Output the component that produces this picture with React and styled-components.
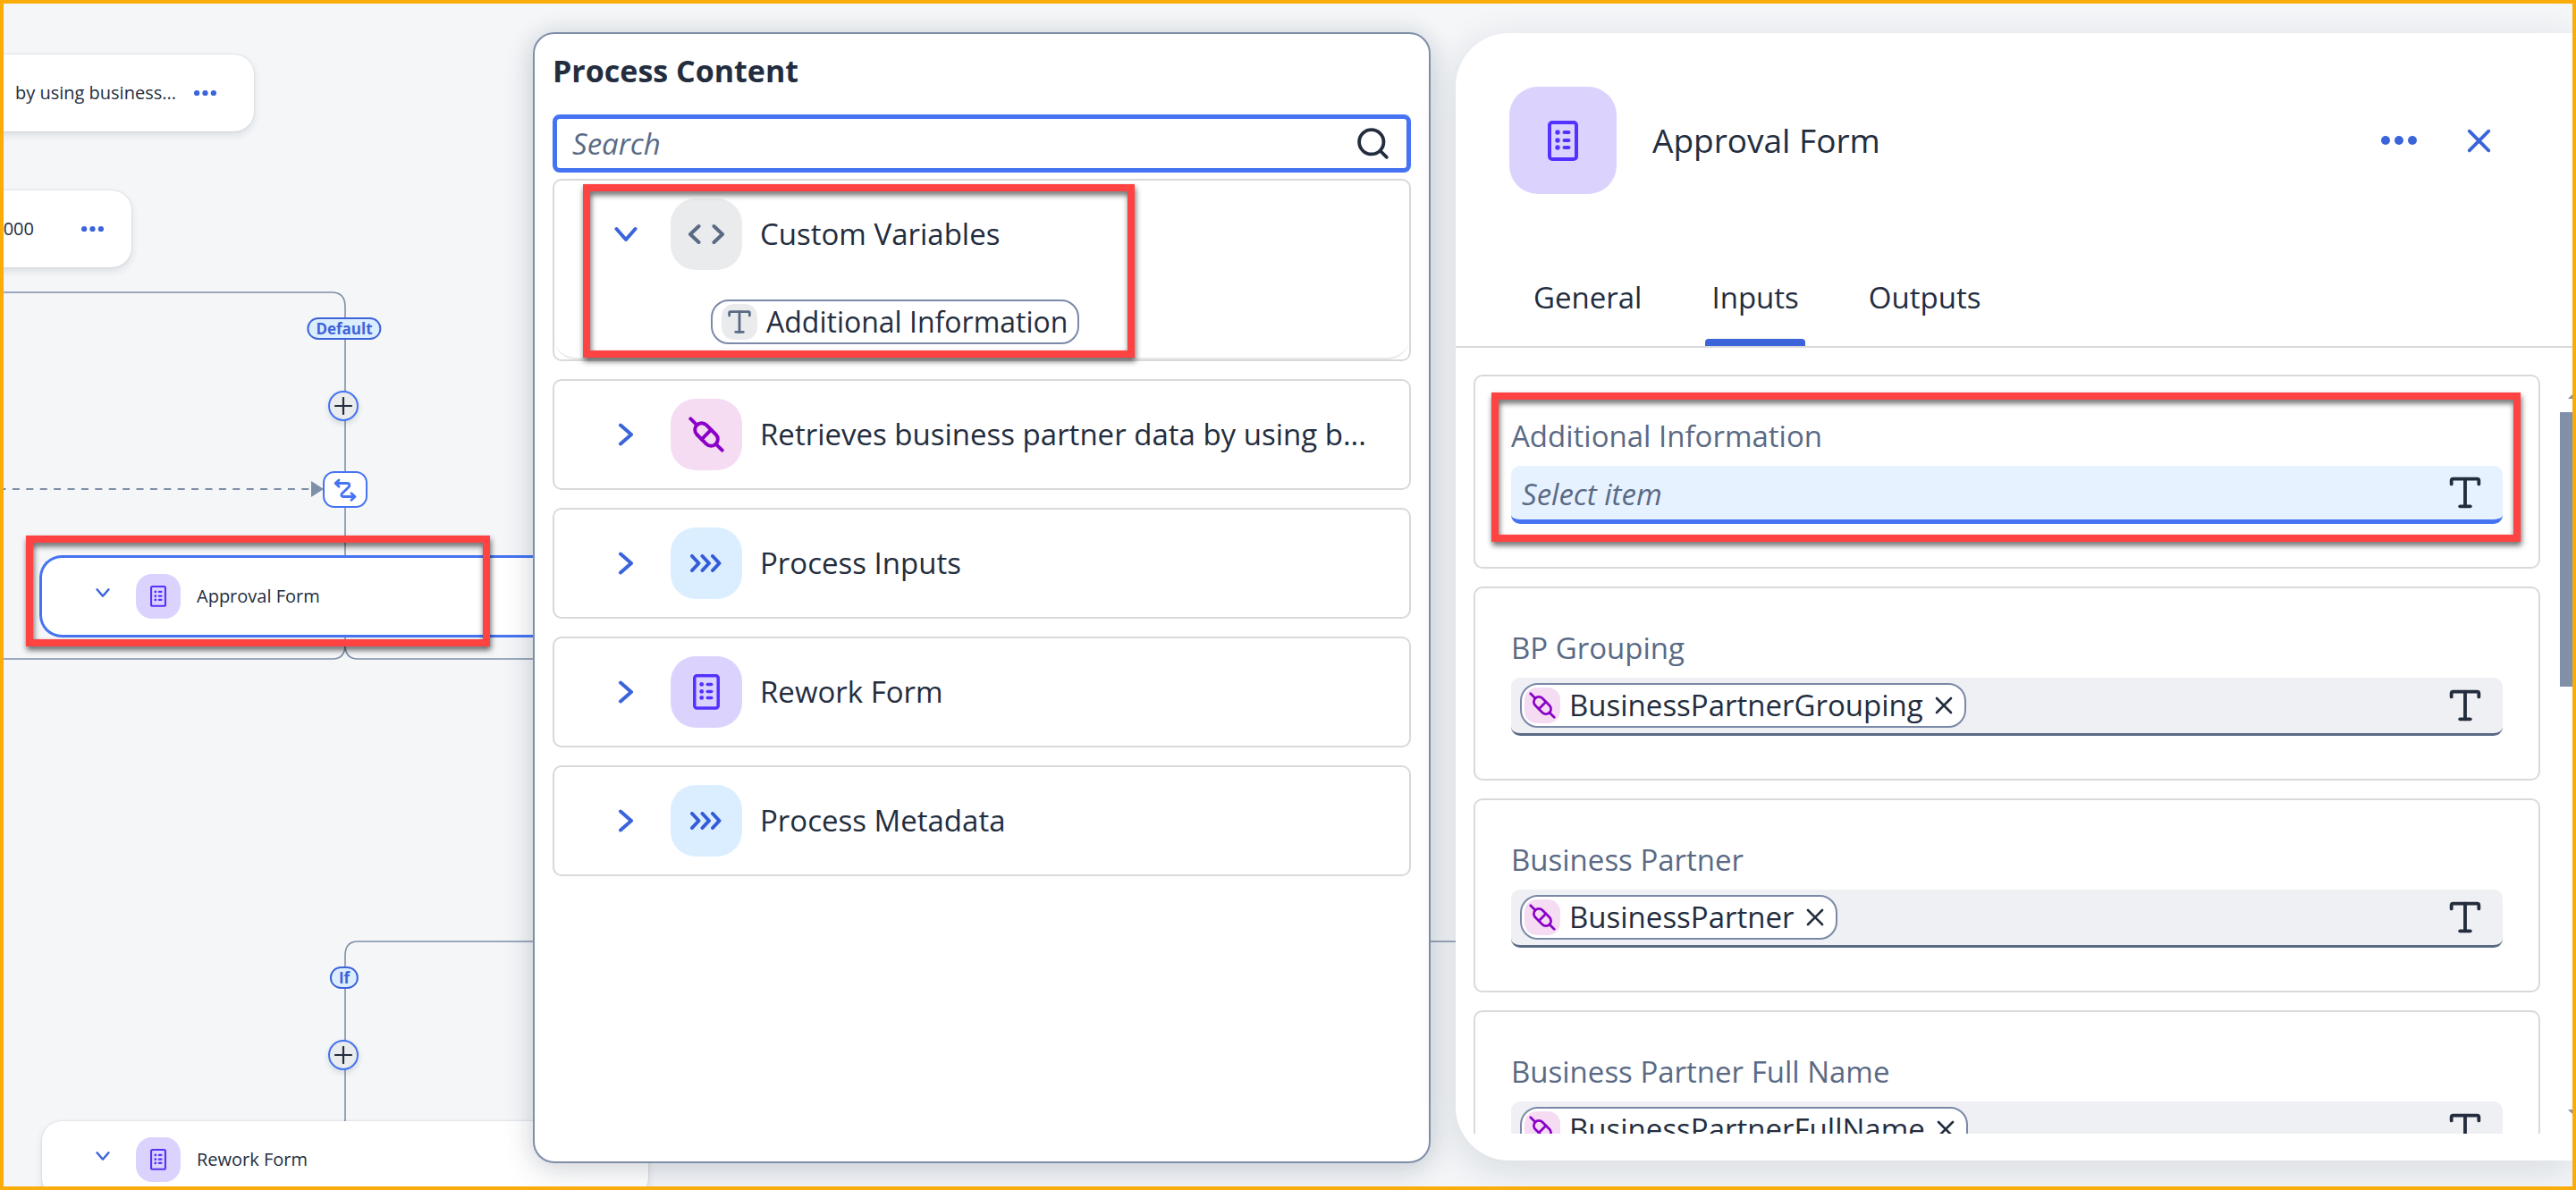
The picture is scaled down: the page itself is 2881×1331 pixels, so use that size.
import React from "react";
import styled, { createGlobalStyle, css } from "styled-components";
import { Search, Type } from "lucide-react";

const c = {
  ink: "#232d3e",
  label: "#5a6a85",
  blue: "#3b64da",
  focus: "#4573f2",
  line: "#d9d9d9",
  edge: "#7f8fa9",
  violet: "#5332ff",
  magenta: "#8b00c8",
};

const tileColors = {
  grey: "#eaebed",
  pink: "#f5dcf2",
  sky: "#dbeeff",
  violet: "#dbd3fe",
};

const GlobalStyle = createGlobalStyle`
  * { box-sizing: border-box; }
  body { margin: 0; }
  body, button, input { font-family: "Open Sans", "Noto Sans", sans-serif; color: ${c.ink}; }
  button { border: 0; padding: 0; background: none; cursor: pointer; text-align: left; }
  svg { display: block; flex: none; }
`;

/* ---------- page ---------- */

const Page = styled.div`
  position: relative;
  height: 100vh;
  overflow: hidden;
  background: #f4f6f8;

  &::after {
    content: "";
    position: absolute;
    inset: 0;
    border: 4px solid #faac0a;
    pointer-events: none;
  }
`;

const Overlay = styled.div`
  position: relative;
  height: 100%;
  display: grid;
  grid-template-columns: 596fr 1004fr 28fr 1249fr;
  padding: 36px 4px 30px 0;
`;

const Highlight = styled.div`
  position: absolute;
  border: 8px solid #ff4242;
  filter: drop-shadow(1px 4px 3px rgba(0, 0, 0, 0.6));
  pointer-events: none;
  z-index: 2;
`;

const Tile = styled.span`
  display: flex;
  flex: none;
  align-items: center;
  justify-content: center;
  width: ${(p) => p.$size}px;
  height: ${(p) => p.$size}px;
  border-radius: ${(p) => p.$radius}px;
  background: ${(p) => tileColors[p.$tone]};
`;

/* ---------- icons ---------- */

const FormIcon = ({ width }) => (
  <svg width={width} viewBox="0 0 34 45" fill={c.violet}>
    <rect x="2" y="2" width="30" height="41" rx="3" fill="none" stroke={c.violet} strokeWidth="4" />
    {[13, 22, 30].map((y) => (
      <g key={y}>
        <circle cx="11" cy={y} r="2.7" />
        <rect x="16.5" y={y - 2} width="9" height="4" rx="2" />
      </g>
    ))}
  </svg>
);

const LinkIcon = ({ size, stroke = 4 }) => (
  <svg width={size} height={size} viewBox="0 0 40 40" fill="none" stroke={c.magenta} strokeWidth={stroke} strokeLinecap="round">
    <g transform="rotate(45 20 20)">
      <path d="M-5 20H5M35 20H45M20 12.5V27.5" />
      <rect x="5" y="12.5" width="30" height="15" rx="7.5" />
    </g>
  </svg>
);

const FlowIcon = () => (
  <svg width="36" height="20" viewBox="0 0 36 20" fill="none" stroke="#345bd8" strokeWidth="4" strokeLinecap="round" strokeLinejoin="round">
    <path d="M2 2l7.500 8-7.500 8M13.500 2l7.500 8-7.500 8M25 2l7.500 8-7.500 8" />
  </svg>
);

const CodeIcon = () => (
  <svg width="42" height="24" viewBox="0 0 42 24" fill="none" stroke={c.label} strokeWidth="4" strokeLinecap="round" strokeLinejoin="round">
    <path d="M12.500 3L3 12l9.500 9M29.500 3l9.500 9-9.500 9" />
  </svg>
);

const ChevronIcon = ({ open, size = 26 }) => (
  <svg width={size} height={size} viewBox="0 0 26 26" fill="none" stroke={c.blue} strokeWidth="4" strokeLinecap="round" strokeLinejoin="round">
    <path d={open ? "M2.500 7L13 19 23.500 7" : "M7 2.500L19 13 7 23.500"} />
  </svg>
);

const DotsIcon = ({ width }) => (
  <svg width={width} viewBox="0 0 40 10" fill={c.blue}>
    <circle cx="5" cy="5" r="5" />
    <circle cx="20" cy="5" r="5" />
    <circle cx="35" cy="5" r="5" />
  </svg>
);

const CrossIcon = ({ size, stroke, color }) => (
  <svg width={size} height={size} viewBox="0 0 20 20" fill="none" stroke={color} strokeWidth={stroke} strokeLinecap="round">
    <path d="M2 2L18 18M18 2L2 18" />
  </svg>
);

const RouteIcon = () => (
  <svg width="26" height="26" viewBox="0 0 26 26" fill="none" stroke={c.focus} strokeWidth="2.800" strokeLinecap="round" strokeLinejoin="round">
    <path d="M2.500 5.500H15.500C18 5.500 18.500 8 17 9.700L9.500 17C8 18.700 9 20.500 11 20.500H23.500" />
    <path d="M6 2L2.200 5.500 6 9.200M20 16.800L24 20.500 20 24.200" />
  </svg>
);

const PlusIcon = () => (
  <svg width="20" height="20" viewBox="0 0 20 20" stroke={c.ink} strokeWidth="2.200" strokeLinecap="round">
    <path d="M10 1V19M1 10H19" />
  </svg>
);

/* ---------- process canvas ---------- */

const Canvas = styled.div`
  position: absolute;
  inset: 0;
  overflow: hidden;
`;

const Edges = styled.svg`
  position: absolute;
  inset: 0;
  width: 100%;
  height: 100%;
  fill: none;
  stroke: ${c.edge};
  stroke-width: 1.6;
`;

const Node = styled.div`
  position: absolute;
  left: ${(p) => p.$x}px;
  top: ${(p) => p.$y}px;
  width: ${(p) => p.$w}px;
  height: 86px;
  display: flex;
  align-items: center;
  padding: 0 ${(p) => p.$end || 42}px 0 60px;
  border-radius: 22px;
  background: #fff;
  font-size: 20px;
  line-height: 28px;
  white-space: nowrap;
  box-shadow: 0 0 2px rgba(34, 53, 72, 0.2), 0 4px 8px rgba(34, 53, 72, 0.12);
  ${(p) => p.$selected && css`box-shadow: 0 0 0 3px ${c.focus};`}
`;

const NodeToggle = styled.button`
  margin: 0 29px 8px 0;
`;

const NodeTitle = styled.span`
  margin-left: ${(p) => (p.$end ? "auto" : "18px")};
`;

const NodeMenu = styled.button`
  margin-left: ${(p) => p.$gap || "auto"};
`;

const Badge = styled.span`
  position: absolute;
  left: ${(p) => p.$x}px;
  top: ${(p) => p.$y}px;
  transform: translateX(-50%);
  height: 25px;
  padding: 0 8px;
  border: 2px solid #3f63d8;
  border-radius: 13px;
  background: #dbeeff;
  color: #3f63d8;
  font-size: 17px;
  font-weight: 700;
  line-height: 21px;
`;

const AddStep = styled.button`
  position: absolute;
  left: ${(p) => p.$x}px;
  top: ${(p) => p.$y}px;
  width: 34px;
  height: 34px;
  display: flex;
  align-items: center;
  justify-content: center;
  border: 2px solid ${c.focus};
  border-radius: 50%;
  background: #e9ebec;
  box-shadow: 0 3px 6px rgba(34, 53, 72, 0.15);
`;

const RouteStep = styled.button`
  position: absolute;
  left: ${(p) => p.$x}px;
  top: ${(p) => p.$y}px;
  width: 50px;
  height: 41px;
  display: flex;
  align-items: center;
  justify-content: center;
  border: 2px solid ${c.focus};
  border-radius: 13px;
  background: #fff;
`;

const CanvasHighlight = styled(Highlight)`
  left: 29px;
  top: 599px;
  width: 519px;
  height: 124px;
`;

const FormNode = ({ title, ...place }) => (
  <Node {...place}>
    <NodeToggle aria-label={`Toggle ${title}`}><ChevronIcon open size={16} /></NodeToggle>
    <Tile $size={50} $radius={18} $tone="violet"><FormIcon width={18} /></Tile>
    <NodeTitle>{title}</NodeTitle>
    <NodeMenu aria-label="More"><DotsIcon width={25} /></NodeMenu>
  </Node>
);

const ProcessCanvas = () => (
  <Canvas>
    <Edges>
      <path d="M0 327H371Q386 327 386 343V624" />
      <path d="M0 547H348" strokeWidth="2" strokeDasharray="8 7.400" strokeDashoffset="1.500" />
      <path d="M348 538V556L362 547Z" fill={c.edge} stroke="none" />
      <path d="M0 737H372Q386 737 386 721V710M386 721Q386 737 400 737H700" />
      <path d="M1700 1053H400Q386 1053 386 1069V1256" />
    </Edges>
    <Node $x={-200} $y={61} $w={484}>
      <NodeTitle $end>by using business...</NodeTitle>
      <NodeMenu $gap="20px" aria-label="More"><DotsIcon width={25} /></NodeMenu>
    </Node>
    <Node $x={-200} $y={213} $w={347} $end={31}>
      <NodeTitle $end>000</NodeTitle>
      <NodeMenu $gap="53px" aria-label="More"><DotsIcon width={25} /></NodeMenu>
    </Node>
    <Badge $x={385} $y={355}>Default</Badge>
    <AddStep $x={367} $y={437} aria-label="Add step"><PlusIcon /></AddStep>
    <RouteStep $x={361} $y={527} aria-label="Route"><RouteIcon /></RouteStep>
    <FormNode title="Approval Form" $x={47} $y={624} $w={678} $selected />
    <Badge $x={385} $y={1081}>If</Badge>
    <AddStep $x={367} $y={1163} aria-label="Add step"><PlusIcon /></AddStep>
    <FormNode title="Rework Form" $x={47} $y={1254} $w={678} />
    <CanvasHighlight />
  </Canvas>
);

/* ---------- chips ---------- */

const Chip = styled.span`
  display: inline-flex;
  align-items: center;
  flex: none;
  height: 50px;
  padding: ${(p) => (p.$inField ? "0 13px 0 3px" : "0 11px 0 10px")};
  border: 2px solid #7a89a8;
  border-radius: 20px;
  background: #fff;
  font-size: ${(p) => (p.$inField ? 33 : 32)}px;
  line-height: 44px;
`;

const ChipText = styled.span`
  margin-left: 10px;
`;

const ChipRemove = styled.button`
  margin-left: 13px;
`;

/* ---------- process content popover ---------- */

const Popover = styled.section`
  grid-column: 2;
  min-width: 0;
  padding: 18px 20px;
  border: 2px solid ${c.edge};
  border-radius: 24px;
  background: #fff;
  box-shadow: 0 0 24px rgba(34, 53, 72, 0.1), 0 10px 36px rgba(34, 53, 72, 0.14);
`;

const PopoverTitle = styled.h2`
  margin: 0 0 26px;
  font-size: 34px;
  font-weight: 700;
  line-height: 46px;
`;

const SearchBox = styled.label`
  display: flex;
  align-items: center;
  height: 65px;
  margin-bottom: 7px;
  padding: 0 17px 0 17px;
  border: 5px solid ${c.focus};
  border-radius: 8px;
`;

const TextInput = styled.input`
  flex: 1;
  min-width: 0;
  height: 50px;
  padding: 0;
  border: 0;
  outline: 0;
  background: none;
  font-size: 33px;

  &::placeholder {
    color: ${c.label};
    font-style: italic;
    opacity: 1;
  }
`;

const Groups = styled.div`
  display: grid;
  gap: 20px;
`;

const Group = styled.div`
  position: relative;
  border: 2px solid ${c.line};
  border-radius: 10px;
`;

const GroupHeader = styled.button`
  display: flex;
  align-items: center;
  width: 100%;
  height: 120px;
  padding: 0 40px 0 67px;
  font-size: 33px;
  line-height: 44px;

  & > svg { margin-right: 37px; }
`;

const GroupTitle = styled.span`
  margin-left: 20px;
  white-space: nowrap;
`;

const GroupBody = styled.div`
  display: flex;
  padding: 13px 0 15px 175px;
  border-bottom: 2px solid #e8e8e8;
  border-radius: 0 0 24px 24px;
`;

const GroupHighlight = styled(Highlight)`
  left: 32px;
  top: 4px;
  bottom: 2px;
  width: 617px;
`;

const groups = [
  { title: "Custom Variables", tone: "grey", icon: <CodeIcon />, items: ["Additional Information"] },
  { title: "Retrieves business partner data by using b...", tone: "pink", icon: <LinkIcon size={40} /> },
  { title: "Process Inputs", tone: "sky", icon: <FlowIcon /> },
  { title: "Rework Form", tone: "violet", icon: <FormIcon width={30} /> },
  { title: "Process Metadata", tone: "sky", icon: <FlowIcon /> },
];

const ProcessContent = () => (
  <Popover aria-label="Process Content">
    <PopoverTitle>Process Content</PopoverTitle>
    <SearchBox>
      <TextInput type="text" placeholder="Search" aria-label="Search" />
      <Search size={41} strokeWidth={2.2} />
    </SearchBox>
    <Groups>
      {groups.map((g) => (
        <Group key={g.title}>
          <GroupHeader aria-expanded={Boolean(g.items)}>
            <ChevronIcon open={Boolean(g.items)} />
            <Tile $size={80} $radius={28} $tone={g.tone}>{g.icon}</Tile>
            <GroupTitle>{g.title}</GroupTitle>
          </GroupHeader>
          {g.items && (
            <>
              <GroupBody>
                {g.items.map((item) => (
                  <Chip key={item}>
                    <Tile $size={40} $radius={14} $tone="grey"><Type size={34} color={c.label} /></Tile>
                    <ChipText>{item}</ChipText>
                  </Chip>
                ))}
              </GroupBody>
              <GroupHighlight />
            </>
          )}
        </Group>
      ))}
    </Groups>
  </Popover>
);

/* ---------- approval form panel ---------- */

const Panel = styled.aside`
  grid-column: 4;
  display: flex;
  flex-direction: column;
  min-width: 0;
  min-height: 0;
  margin: 1px 0 3px;
  padding-bottom: 30px;
  border-radius: 60px 0 0 60px;
  background: #fff;
  box-shadow: 0 10px 44px rgba(34, 53, 72, 0.14);
`;

const PanelHeader = styled.header`
  display: flex;
  align-items: center;
  padding: 60px 91px 0 60px;
`;

const PanelTitle = styled.h1`
  flex: 1;
  margin: 0 0 0 40px;
  font-size: 37px;
  font-weight: 400;
  line-height: 52px;
`;

const HeaderActions = styled.div`
  display: flex;
  align-items: center;
  gap: 56px;
`;

const Tabs = styled.div`
  display: flex;
  gap: 64px;
  margin-top: 72px;
  padding-left: 80px;
  border-bottom: 2px solid ${c.line};
`;

const Tab = styled.button`
  padding: 22px 7px 0;
  font-size: 33px;
  line-height: 44px;

  &::after {
    content: "";
    display: block;
    height: 8px;
    margin: 24px -7px 0;
    border-radius: 4px 4px 0 0;
    background: ${(p) => (p.$active ? c.blue : "transparent")};
  }
`;

const PanelBody = styled.div`
  display: flex;
  flex: 1;
  min-height: 0;
  overflow: hidden;
`;

const Cards = styled.div`
  flex: 1;
  display: flex;
  flex-direction: column;
  gap: 20px;
  min-width: 0;
  padding: 30px 22px 0 20px;
`;

const Card = styled.div`
  position: relative;
  flex: none;
  padding: 45px 40px 48px;
  border: 2px solid ${c.line};
  border-radius: 10px;
`;

const FieldLabel = styled.label`
  display: block;
  margin-bottom: 11px;
  color: ${c.label};
  font-size: 33px;
  line-height: 44px;
`;

const Field = styled.div`
  display: flex;
  align-items: center;
  height: 65px;
  padding: 0 19px 0 ${(p) => (p.$focused ? 12 : 10)}px;
  border-bottom: ${(p) => (p.$focused ? `5px solid ${c.focus}` : `3px solid ${c.label}`)};
  border-radius: 10px;
  background: ${(p) => (p.$focused ? "#e6f2ff" : "#eff0f3")};

  & > input { padding-top: 2px; }
`;

const CardHighlight = styled(Highlight)`
  inset: 18px 20px 28px 18px;
`;

const Scrollbar = styled.div`
  display: flex;
  flex-direction: column;
  width: 14px;
  padding: 52px 0 22px;
`;

const Thumb = styled.div`
  height: 307px;
  margin: 15px 0 auto;
  background: #8190a9;
`;

const fields = [
  { id: "additional-information", label: "Additional Information", focused: true },
  { id: "bp-grouping", label: "BP Grouping", value: "BusinessPartnerGrouping" },
  { id: "business-partner", label: "Business Partner", value: "BusinessPartner" },
  { id: "full-name", label: "Business Partner Full Name", value: "BusinessPartnerFullName" },
];

const ApprovalPanel = () => (
  <Panel>
    <PanelHeader>
      <Tile $size={120} $radius={32} $tone="violet"><FormIcon width={34} /></Tile>
      <PanelTitle>Approval Form</PanelTitle>
      <HeaderActions>
        <button aria-label="More"><DotsIcon width={40} /></button>
        <button aria-label="Close"><CrossIcon size={27} stroke={2.8} color={c.blue} /></button>
      </HeaderActions>
    </PanelHeader>
    <Tabs role="tablist">
      <Tab role="tab">General</Tab>
      <Tab role="tab" aria-selected="true" $active>Inputs</Tab>
      <Tab role="tab">Outputs</Tab>
    </Tabs>
    <PanelBody>
      <Cards>
        {fields.map((f) => (
          <Card key={f.id}>
            <FieldLabel htmlFor={f.id}>{f.label}</FieldLabel>
            <Field $focused={f.focused}>
              {f.value && (
                <Chip $inField>
                  <Tile $size={40} $radius={14} $tone="pink"><LinkIcon size={30} stroke={3.6} /></Tile>
                  <ChipText>{f.value}</ChipText>
                  <ChipRemove aria-label={`Remove ${f.value}`}>
                    <CrossIcon size={20} stroke={2.6} color={c.ink} />
                  </ChipRemove>
                </Chip>
              )}
              <TextInput id={f.id} type="text" placeholder={f.focused ? "Select item" : undefined} />
              <Type size={46} />
            </Field>
            {f.focused && <CardHighlight />}
          </Card>
        ))}
      </Cards>
      <Scrollbar aria-hidden="true">
        <svg width="14" height="5" viewBox="0 0 14 5" fill="#8190a9"><path d="M9 5L14 0V5Z" /></svg>
        <Thumb />
        <svg width="14" height="5" viewBox="0 0 14 5" fill="#8190a9"><path d="M9 0H14V5Z" /></svg>
      </Scrollbar>
    </PanelBody>
  </Panel>
);

export default function App() {
  return (
    <Page>
      <GlobalStyle />
      <ProcessCanvas />
      <Overlay>
        <ProcessContent />
        <ApprovalPanel />
      </Overlay>
    </Page>
  );
}
